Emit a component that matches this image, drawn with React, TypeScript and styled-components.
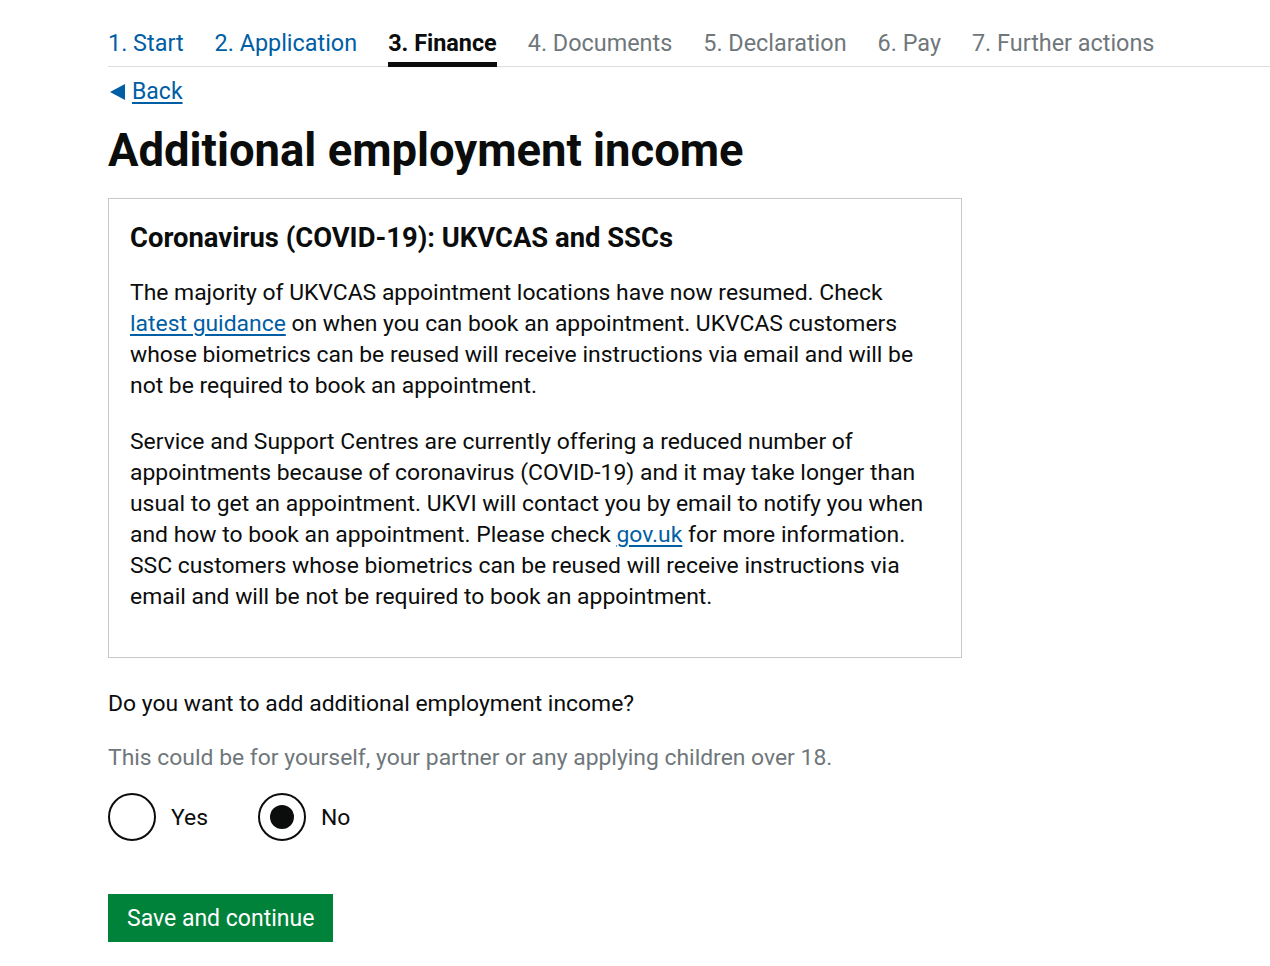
import styled, { createGlobalStyle } from "styled-components";

const Global = createGlobalStyle`
  body {
    margin: 0;
    background: #fff;
    font-family: Roboto, "Liberation Sans", sans-serif;
    color: #0b0c0c;
  }
`

const Page = styled.div`
  padding-left: 108px;
  padding-top: 25px;
`

const Steps = styled.nav`
  display: flex;
  gap: 31px;
  border-bottom: 1px solid #dedede;
  height: 42px;
  box-sizing: border-box;
`

const Step = styled.a<{ $state: "done" | "current" | "todo" }>`
  font-size: 23.4px;
  line-height: 36px;
  height: 42px;
  box-sizing: border-box;
  text-decoration: none;
  color: ${p => p.$state === "done" ? "#005ea5" : p.$state === "current" ? "#0b0c0c" : "#6f777b"};
  font-weight: ${p => p.$state === "current" ? 700 : 400};
  border-bottom: 5px solid ${p => p.$state === "current" ? "#0b0c0c" : "transparent"};
`

const BackLink = styled.a`
  display: inline-flex;
  align-items: center;
  gap: 7px;
  margin-top: 10px;
  padding-left: 2px;
  font-size: 23px;
  line-height: 30px;
  color: #005ea5;
  text-decoration: underline;
  text-underline-offset: 3px;
  &::before {
    content: "";
    width: 0;
    height: 0;
    border-top: 8px solid transparent;
    border-bottom: 8px solid transparent;
    border-right: 15px solid #005ea5;
  }
`

const Title = styled.h1`
  margin: 17px 0 20px;
  font-size: 45.4px;
  line-height: 54px;
  font-weight: 700;
`

const Notice = styled.section`
  width: 854px;
  box-sizing: border-box;
  border: 1px solid #c8c8c8;
  padding: 21px 21px 45px;
`

const NoticeHeading = styled.h2`
  margin: 0 0 21px;
  font-size: 27.4px;
  line-height: 36px;
  font-weight: 700;
`

const Para = styled.p`
  margin: 0 0 25px;
  font-size: 22.9px;
  line-height: 31px;
  &:last-child { margin-bottom: 0; }
`

const Link = styled.a`
  color: #005ea5;
  text-decoration: underline;
  text-underline-offset: 3px;
`

const Question = styled.div`
  margin-top: 30px;
  font-size: 22.9px;
  line-height: 31px;
`

const Hint = styled.div`
  margin-top: 23px;
  font-size: 22.9px;
  line-height: 31px;
  color: #6f777b;
`

const Radios = styled.div`
  display: flex;
  gap: 50px;
  margin-top: 20px;
`

const RadioItem = styled.label`
  display: flex;
  align-items: center;
  gap: 15px;
  font-size: 22.9px;
`

const Circle = styled.span<{ $checked?: boolean }>`
  position: relative;
  width: 48px;
  height: 48px;
  box-sizing: border-box;
  border: 2px solid #0b0c0c;
  border-radius: 50%;
  &::after {
    content: "";
    display: ${p => p.$checked ? "block" : "none"};
    position: absolute;
    left: 10px;
    top: 10px;
    width: 24px;
    height: 24px;
    border-radius: 50%;
    background: #0b0c0c;
  }
`

const Button = styled.button`
  display: block;
  margin-top: 53px;
  background: #00823b;
  color: #fff;
  border: 0;
  box-shadow: 0 2px 0 #003418;
  font-family: inherit;
  font-size: 23px;
  line-height: 29px;
  padding: 10px 19px 9px;
`

export default function App() {
  return (
    <Page>
      <Global />
      <Steps>
        <Step $state="done">1. Start</Step>
        <Step $state="done">2. Application</Step>
        <Step $state="current">3. Finance</Step>
        <Step $state="todo">4. Documents</Step>
        <Step $state="todo">5. Declaration</Step>
        <Step $state="todo">6. Pay</Step>
        <Step $state="todo">7. Further actions</Step>
      </Steps>
      <BackLink>Back</BackLink>
      <Title>Additional employment income</Title>
      <Notice>
        <NoticeHeading>Coronavirus (COVID-19): UKVCAS and SSCs</NoticeHeading>
        <Para>
          The majority of UKVCAS appointment locations have now resumed. Check <Link>latest guidance</Link> on when you can book an appointment. UKVCAS customers whose biometrics can be reused will receive instructions via email and will be not be required to book an appointment.
        </Para>
        <Para>
          Service and Support Centres are currently offering a reduced number of appointments because of coronavirus (COVID-19) and it may take longer than usual to get an appointment. UKVI will contact you by email to notify you when and how to book an appointment. Please check <Link>gov.uk</Link> for more information. SSC customers whose biometrics can be reused will receive instructions via email and will be not be required to book an appointment.
        </Para>
      </Notice>
      <Question>Do you want to add additional employment income?</Question>
      <Hint>This could be for yourself, your partner or any applying children over 18.</Hint>
      <Radios>
        <RadioItem><Circle />Yes</RadioItem>
        <RadioItem><Circle $checked />No</RadioItem>
      </Radios>
      <Button>Save and continue</Button>
    </Page>
  )
}
